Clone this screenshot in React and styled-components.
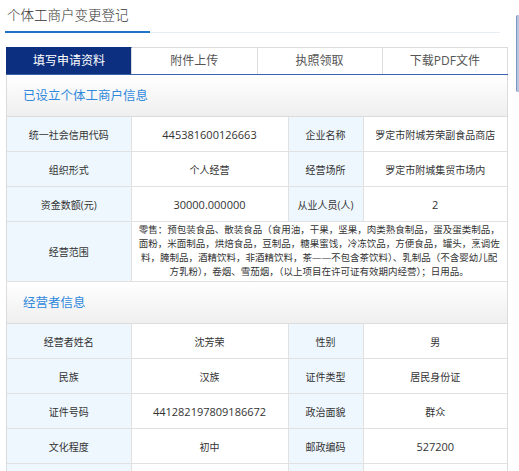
import styled, { createGlobalStyle } from "styled-components";

const GlobalStyle = createGlobalStyle`
  html, body {
    margin: 0;
    padding: 0;
    overflow: hidden;
    background: #fff;
  }
  body {
    font-family: "Open Sans", "Noto Sans CJK SC", sans-serif;
    color: #333;
  }
`;

const TABS = ["填写申请资料", "附件上传", "执照领取", "下载PDF文件"];

const BUSINESS = [
  [
    { label: "统一社会信用代码", value: "445381600126663", num: true },
    { label: "企业名称", value: "罗定市附城芳荣副食品商店" },
  ],
  [
    { label: "组织形式", value: "个人经营" },
    { label: "经营场所", value: "罗定市附城集贸市场内" },
  ],
  [
    { label: "资金数额(元)", value: "30000.000000", num: true },
    { label: "从业人员(人)", value: "2", num: true },
  ],
];

const SCOPE =
  "零售：预包装食品、散装食品（食用油，干果，坚果，肉类熟食制品，蛋及蛋类制品，面粉，米面制品，烘焙食品，豆制品，糖果蜜饯，冷冻饮品，方便食品，罐头，烹调佐料，腌制品，酒精饮料，非酒精饮料，茶——不包含茶饮料）、乳制品（不含婴幼儿配方乳粉），卷烟、雪茄烟，（以上项目在许可证有效期内经营）；日用品。";

const OPERATOR = [
  [
    { label: "经营者姓名", value: "沈芳荣" },
    { label: "性别", value: "男" },
  ],
  [
    { label: "民族", value: "汉族" },
    { label: "证件类型", value: "居民身份证" },
  ],
  [
    { label: "证件号码", value: "441282197809186672", num: true },
    { label: "政治面貌", value: "群众" },
  ],
  [
    { label: "文化程度", value: "初中" },
    { label: "邮政编码", value: "527200", num: true },
  ],
  [
    { label: "", value: "" },
    { label: "", value: "" },
  ],
];

const InfoRows = ({ rows }) =>
  rows.map((row, i) => (
    <tr key={i}>
      {row.map((cell, j) => [
        <Label key={j + "l"}>{cell.label}</Label>,
        <Value key={j + "v"} $num={cell.num}>
          {cell.value}
        </Value>,
      ])}
    </tr>
  ));

const Cols = () => (
  <colgroup>
    <col style={{ width: 124 }} />
    <col style={{ width: 157 }} />
    <col style={{ width: 75 }} />
    <col />
  </colgroup>
);

const App = () => {
  return (
    <>
      <GlobalStyle />
      <Page>
        <TitleBar>
          <Title>个体工商户变更登记</Title>
        </TitleBar>

        <TabBar>
          {TABS.map((t, i) => (
            <Tab key={t} $active={i === 0}>
              {t}
            </Tab>
          ))}
        </TabBar>

        <Card>
          <SectionHeader>已设立个体工商户信息</SectionHeader>
          <Table>
            <Cols />
            <tbody>
              <InfoRows rows={BUSINESS} />
              <tr>
                <Label>经营范围</Label>
                <Scope colSpan={3}>{SCOPE}</Scope>
              </tr>
            </tbody>
          </Table>

          <SectionHeader>经营者信息</SectionHeader>
          <Table>
            <Cols />
            <tbody>
              <InfoRows rows={OPERATOR} />
            </tbody>
          </Table>
        </Card>
      </Page>
      <ScrollThumb />
    </>
  );
};

export default App;

const Page = styled.div`
  width: 504px;
  padding-left: 5px;
`;

const TitleBar = styled.div`
  width: 495px;
  border-bottom: 1px solid #e6edf5;
`;

const Title = styled.div`
  width: 143px;
  padding: 1px 0 0 2px;
  height: 30px;
  line-height: 28px;
  font-size: 13.5px;
  font-weight: 300;
  color: #333;
  border-bottom: 2px solid #1f74c8;
  margin-bottom: -1px;
`;

const TabBar = styled.div`
  display: flex;
  width: 502px;
  margin: 14px 0 0 1px;
  border-bottom: 1px solid #3b63ab;
`;

const Tab = styled.div`
  flex: 1;
  height: 26px;
  line-height: 26px;
  text-align: center;
  font-size: 12px;
  color: ${(p) => (p.$active ? "#fff" : "#555")};
  background: ${(p) => (p.$active ? "#0c2f80" : "#fff")};
  border-top: 1px solid ${(p) => (p.$active ? "#0c2f80" : "#dcdcdc")};
  border-right: 1px solid #dcdcdc;
  &:first-child {
    border-left: 1px solid #0c2f80;
  }
`;

const Card = styled.div`
  width: 500px;
  margin-left: 1px;
  border: 1px solid #dcdcdc;
  border-top: none;
`;

const SectionHeader = styled.div`
  height: 41px;
  line-height: 41px;
  padding-left: 16px;
  font-size: 12.5px;
  color: #3089dc;
  background: linear-gradient(to bottom, #ffffff, #efefef);
  border-bottom: 1px solid #dcdcdc;
`;

const Table = styled.table`
  width: 100%;
  border-collapse: collapse;
  table-layout: fixed;

  td {
    border: 1px solid #e1e1e1;
    text-align: center;
    vertical-align: middle;
  }
  tr:first-child td {
    border-top: none;
  }
  td:first-child {
    border-left: none;
  }
  td:last-child {
    border-right: none;
  }
`;

const Label = styled.td`
  height: 34px;
  padding: 0 4px;
  background: #eef7fe;
  font-size: 10px;
  color: #333;
`;

const Value = styled.td`
  height: 34px;
  padding: 0 4px;
  font-size: ${(p) => (p.$num ? "11px" : "10px")};
  color: #333;
`;

const Scope = styled.td`
  padding: 1px 5px 2px;
  font-size: 9.5px;
  line-height: 14px;
  color: #333;
`;

const ScrollThumb = styled.div`
  position: fixed;
  top: 15px;
  right: 0;
  width: 2px;
  height: 77px;
  background: #b7c5de;
  border-left: 1px solid #7d95c2;
  border-radius: 2px 0 0 2px;
`;
